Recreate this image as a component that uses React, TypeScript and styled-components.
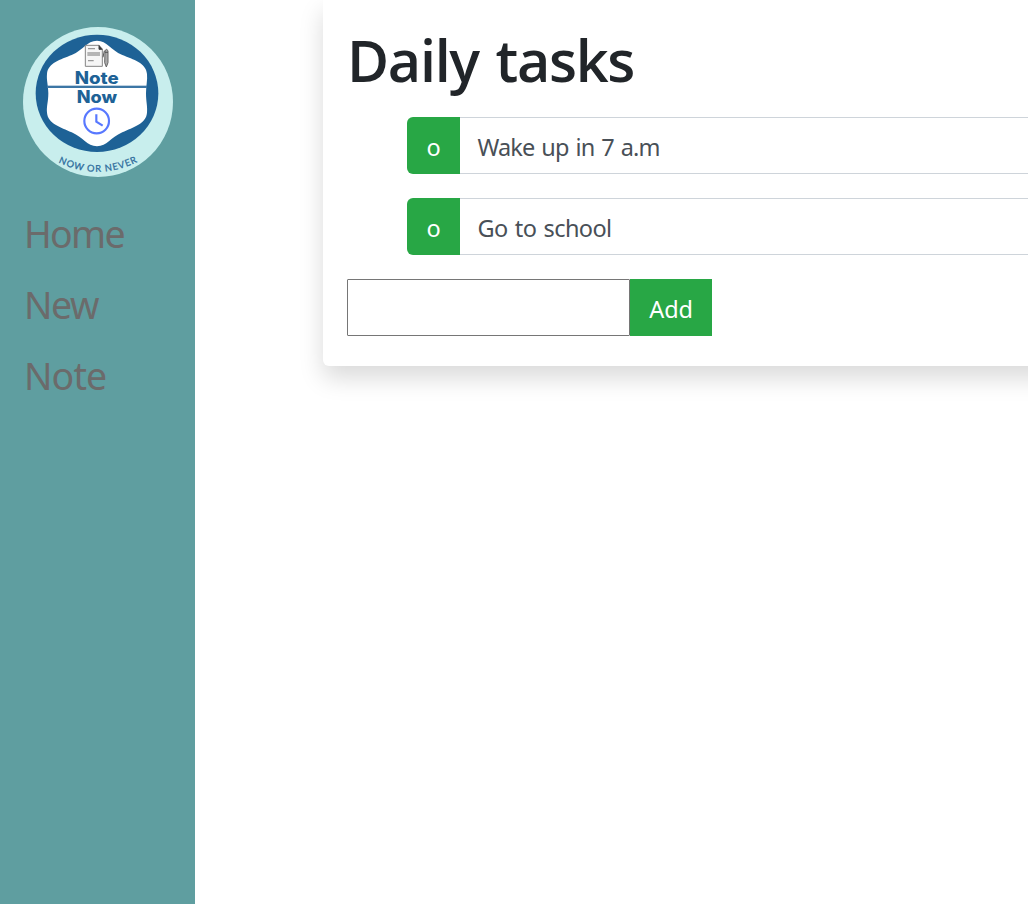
import React from "react";
import styled, { createGlobalStyle } from "styled-components";

const GlobalStyle = createGlobalStyle`
  *, *::before, *::after { box-sizing: border-box; }
  html, body { margin: 0; height: 100%; overflow: hidden; background: #fff; }
  body {
    font-family: "Open Sans", "Noto Sans", sans-serif;
    font-size: 24px;
    line-height: 36px;
    color: #212529;
  }
`;

const Page = styled.div`
  display: flex;
  height: 904px;
  overflow: hidden;
`;

const Sidebar = styled.aside`
  flex: 0 0 195px;
  background: #5f9ea0;
  padding: 27px 0 0 23px;
`;

const Logo = styled.svg`
  display: block;
  width: 150px;
  height: 150px;
`;

const Nav = styled.nav`
  display: flex;
  flex-direction: column;
  padding: 21px 0 0 1px;
`;

const NavLink = styled.a<{ $spacing: number }>`
  height: 71px;
  line-height: 71px;
  font-family: "Noto Sans", sans-serif;
  font-size: 37.5px;
  letter-spacing: ${(p) => p.$spacing}px;
  color: #6b6b6b;
  text-decoration: none;
`;

const Main = styled.main`
  flex: 1 0 auto;
  padding-left: 128px;
`;

const Card = styled.section`
  width: 1100px;
  height: 366px;
  padding: 24px;
  background: #fff;
  border-radius: 0 0 6px 6px;
  box-shadow: 0 12px 24px rgba(0, 0, 0, 0.15);
`;

const Title = styled.h1`
  margin: 0 0 21px;
  font-size: 57.5px;
  font-weight: 600;
  line-height: 72px;
  letter-spacing: -1.3px;
  word-spacing: 3px;
`;

const TaskList = styled.div`
  display: flex;
  flex-direction: column;
  gap: 24px;
  margin: 0 0 24px 60px;
`;

const Task = styled.div`
  display: flex;
  height: 57px;
`;

const TaskButton = styled.button`
  width: 53px;
  padding: 3px 0 0;
  border: 0;
  border-radius: 6px 0 0 6px;
  background: #28a745;
  color: #fff;
  font: 23.5px/36px "Noto Sans", sans-serif;
`;

const TaskText = styled.div<{ $spacing: number }>`
  flex: 1;
  padding: 11px 18px 0 17.5px;
  border: 1px solid #ced4da;
  border-left: 0;
  color: #495057;
  font: 23.5px/36px "Noto Sans", sans-serif;
  letter-spacing: ${(p) => p.$spacing}px;
  word-spacing: 1.7px;
`;

const AddForm = styled.div`
  display: flex;
  height: 57px;
`;

const TextField = styled.input`
  width: 283px;
  padding: 2px 3px;
  border: 1px solid #767676;
  border-radius: 1px;
  background: #fff;
  font: inherit;
  outline: none;
`;

const AddButton = styled.button`
  width: 82px;
  padding: 3px 0 0;
  border: 0;
  background: #28a745;
  color: #fff;
  font: 23.5px/36px "Noto Sans", sans-serif;
  letter-spacing: -0.2px;
`;

function NoteNowLogo() {
  return (
    <Logo viewBox="24 21 450 450" aria-label="Note Now">
      <circle cx="249" cy="246" r="225" fill="#c8eeed" />
      <ellipse cx="246" cy="220" rx="184" ry="176" fill="#1e6296" />
      <path
        fill="#fff"
        d="M246 62C215 62 207 89 170 105C137 119 99 128 96 162C94 180 100 197 100 220C100 245 94 260 96 278C99 312 137 321 170 337C207 353 215 379 246 379C277 379 285 353 322 337C355 321 393 312 396 278C398 260 393 245 393 220C393 197 398 180 396 162C393 128 355 119 322 105C285 89 277 62 246 62Z"
      />
      <rect x="96" y="197" width="300" height="7" fill="#3c76a5" />
      <g fill="none" stroke="#858585" strokeWidth="3">
        <path d="M211 76H252L262 87V139H211Z" fill="#f6f6f6" />
        <path d="M252 76V88H262" fill="#333" stroke="#444" />
        <path d="M219 86H240M219 122H236" strokeWidth="4" stroke="#999" />
        <path d="M217 102H255" strokeWidth="12" stroke="#b5b5b5" />
        <path d="M270 92Q275 84 279 92V128L274 141L269 128Z" fill="#aaa" stroke="#686868" />
        <path d="M268 92L264 112M270 97H279" stroke="#555" />
      </g>
      <g fill="#1e6296" fontFamily="Inter, sans-serif" fontWeight="800" fontSize="50">
        <text x="179" y="192" textLength="132" lengthAdjust="spacingAndGlyphs">Note</text>
        <text x="185" y="248" textLength="121" lengthAdjust="spacingAndGlyphs">Now</text>
      </g>
      <g fill="none" stroke="#5878ff" strokeWidth="6.5">
        <circle cx="245" cy="303" r="37" />
        <path d="M244 283V305L263 317" />
      </g>
      <path id="motto-arc" d="M129 427Q247 484 365 427" fill="none" />
      <text
        fill="#2d6c9c"
        stroke="#2d6c9c"
        strokeWidth="0.8"
        fontFamily="Lato, sans-serif"
        fontWeight="400"
        fontSize="28"
      >
        <textPath href="#motto-arc" startOffset="1" textLength="246">
          NOW OR NEVER
        </textPath>
      </text>
    </Logo>
  );
}

const links = [
  { label: "Home", spacing: -1.7 },
  { label: "New", spacing: -1.4 },
  { label: "Note", spacing: -0.9 },
];

const tasks = [
  { label: "Wake up in 7 a.m", spacing: -0.87 },
  { label: "Go to school", spacing: -0.6 },
];

export default function App() {
  return (
    <>
      <GlobalStyle />
      <Page>
        <Sidebar>
          <NoteNowLogo />
          <Nav>
            {links.map((l) => (
              <NavLink key={l.label} $spacing={l.spacing}>
                {l.label}
              </NavLink>
            ))}
          </Nav>
        </Sidebar>
        <Main>
          <Card>
            <Title>Daily tasks</Title>
            <TaskList>
              {tasks.map((t) => (
                <Task key={t.label}>
                  <TaskButton>o</TaskButton>
                  <TaskText $spacing={t.spacing}>{t.label}</TaskText>
                </Task>
              ))}
            </TaskList>
            <AddForm>
              <TextField aria-label="New task" />
              <AddButton>Add</AddButton>
            </AddForm>
          </Card>
        </Main>
      </Page>
    </>
  );
}
